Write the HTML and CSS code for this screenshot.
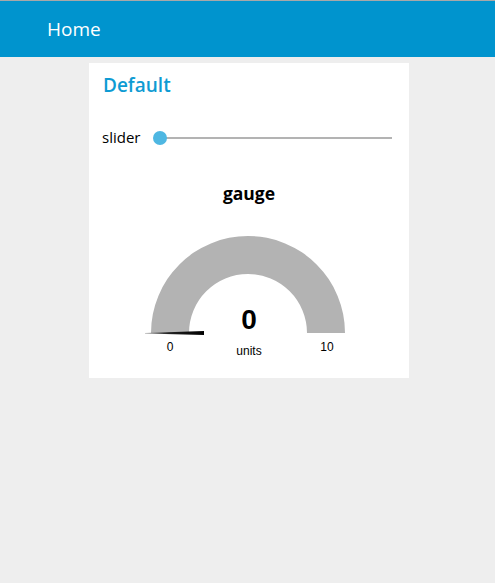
FILE: index.html
```html
<!DOCTYPE html>
<html>
<head>
<meta charset="utf-8">
<link rel="stylesheet" href="styles.css">
</head>
<body>
<header class="toolbar"><span class="toolbar-title">Home</span></header>
<main class="content">
  <section class="card">
    <div class="card-title">Default</div>
    <div class="slider-row">
      <span class="slider-label">slider</span>
      <div class="slider-track"><span class="slider-thumb"></span></div>
    </div>
    <div class="gauge-title">gauge</div>
    <svg class="gauge" width="320" height="155" viewBox="0 0 320 155">
      <defs>
        <linearGradient id="needleGrad" x1="0" y1="0" x2="1" y2="0">
          <stop offset="0" stop-color="#9a9a9a"/>
          <stop offset="0.4" stop-color="#222"/>
          <stop offset="1" stop-color="#000"/>
        </linearGradient>
      </defs>
      <path d="M 62 110 A 97 97 0 0 1 256 110 L 218 110 A 59 59 0 0 0 100 110 Z" fill="#b3b3b3"/>
      <polygon points="56,110 115,108 115,112 56,110.6" fill="url(#needleGrad)"/>
      <text class="gauge-value" x="160" y="106" text-anchor="middle">0</text>
      <text class="gauge-units" x="160" y="132" text-anchor="middle">units</text>
      <text class="gauge-minmax" x="81" y="128" text-anchor="middle">0</text>
      <text class="gauge-minmax" x="238" y="128" text-anchor="middle">10</text>
    </svg>
  </section>
</main>
</body>
</html>
```
FILE: styles.css
```css
html, body {
  margin: 0;
  padding: 0;
  background: #eeeeee;
  font-family: "Open Sans", "Noto Sans", sans-serif;
}
.toolbar {
  box-sizing: border-box;
  height: 57px;
  border-top: 1px solid #a8a8a8;
  background: #0094ce;
  display: flex;
  align-items: center;
  padding-left: 47px;
}
.toolbar-title {
  color: #ffffff;
  font-size: 19px;
  line-height: 1;
  margin-top: 1px;
}
.content {
  padding: 6px 0 0 89px;
}
.card {
  width: 320px;
  height: 315px;
  background: #ffffff;
  display: flex;
  flex-direction: column;
}
.card-title {
  height: 44px;
  line-height: 44px;
  padding-left: 14px;
  color: #0e9bd3;
  font-size: 19px;
  font-weight: 600;
}
.slider-row {
  margin-top: 4px;
  height: 52px;
  display: flex;
  align-items: center;
  padding-left: 13px;
}
.slider-label {
  font-size: 15px;
  color: #000;
  width: 58px;
}
.slider-track {
  position: relative;
  width: 232px;
  height: 2px;
  margin-top: 1px;
  background: #b3b3b3;
}
.slider-thumb {
  position: absolute;
  left: -7px;
  top: -6px;
  width: 14px;
  height: 14px;
  border-radius: 50%;
  background: #4eb7e2;
}
.gauge-title {
  height: 60px;
  line-height: 60px;
  text-align: center;
  font-size: 17.5px;
  font-weight: 700;
  color: #000;
}
.gauge {
  display: block;
}
.gauge-value {
  font-family: "Liberation Sans", Arial, sans-serif;
  font-size: 28px;
  font-weight: 700;
  fill: #000;
}
.gauge-units, .gauge-minmax {
  font-family: "Liberation Sans", Arial, sans-serif;
  font-size: 12px;
  fill: #000;
}
```
